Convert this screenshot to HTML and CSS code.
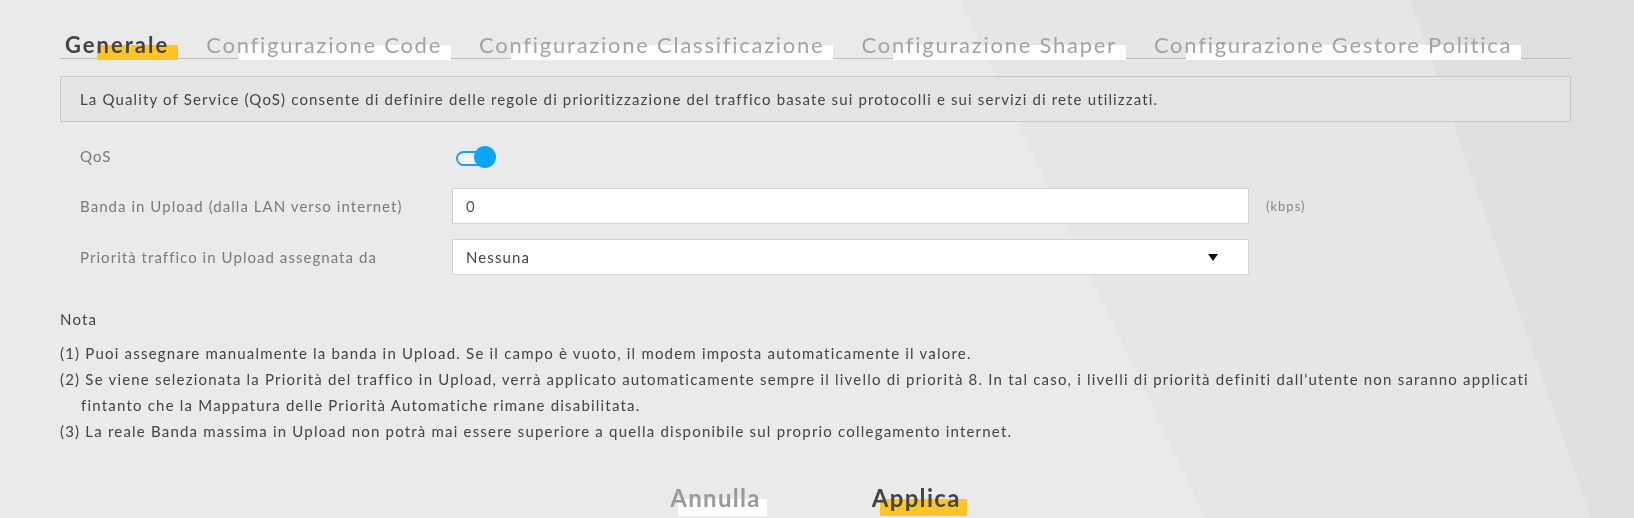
FILE: index.html
```html
<!DOCTYPE html>
<html>
<head>
  <title>QoS - Generale</title>
  <link rel="stylesheet" href="styles.css">
</head>
<body>
  <div class="page">
    <ul class="tabs">
      <li class="tab active"><span>Generale</span></li>
      <li class="tab"><span>Configurazione Code</span></li>
      <li class="tab"><span>Configurazione Classificazione</span></li>
      <li class="tab"><span>Configurazione Shaper</span></li>
      <li class="tab"><span>Configurazione Gestore Politica</span></li>
    </ul>

    <div class="intro">La Quality of Service (QoS) consente di definire delle regole di prioritizzazione del traffico basate sui protocolli e sui servizi di rete utilizzati.</div>

    <form class="settings">
      <div class="row row-switch">
        <label class="label">QoS</label>
        <span class="switch on"><span class="knob"></span></span>
      </div>
      <div class="row">
        <label class="label" for="upload">Banda in Upload (dalla LAN verso internet)</label>
        <input class="text-input" type="text" id="upload" value="0">
        <span class="unit">(kbps)</span>
      </div>
      <div class="row">
        <label class="label">Priorità traffico in Upload assegnata da</label>
        <div class="select">
          <span>Nessuna</span>
          <span class="caret"></span>
        </div>
      </div>
    </form>

    <div class="notes">
      <p class="notes-title">Nota</p>
      <p class="note">(1) Puoi assegnare manualmente la banda in Upload. Se il campo è vuoto, il modem imposta automaticamente il valore.</p>
      <p class="note">(2) Se viene selezionata la Priorità del traffico in Upload, verrà applicato automaticamente sempre il livello di priorità 8. In tal caso, i livelli di priorità definiti dall'utente non saranno applicati fintanto che la Mappatura delle Priorità Automatiche rimane disabilitata.</p>
      <p class="note">(3) La reale Banda massima in Upload non potrà mai essere superiore a quella disponibile sul proprio collegamento internet.</p>
    </div>

    <div class="actions">
      <button type="button" class="btn btn-cancel">Annulla</button>
      <button type="button" class="btn btn-apply">Applica</button>
    </div>
  </div>
</body>
</html>
```

FILE: styles.css
```css
html, body {
  height: 100%;
  overflow: hidden;
}
body {
  margin: 0;
  font-family: Lato, "Liberation Sans", sans-serif;
  background-color: #eaeaea;
  color: #444;
  position: relative;
}
/* background facets */
body::before,
body::after {
  content: "";
  position: fixed;
  top: 0;
  left: 0;
  right: 0;
  bottom: 0;
  z-index: -1;
}
body::before {
  background-color: #e6e6e6;
  clip-path: polygon(960px 0, 100% 0, 100% 100%, 1205px 100%);
}
body::after {
  background-color: #e0e0e0;
  clip-path: polygon(1410px 0, 100% 0, 100% 100%, 1591px 100%);
}
.page {
  padding: 31px 63px 0 60px;
}
.tabs {
  list-style: none;
  margin: 0;
  padding: 0 0 0 5px;
  display: flex;
  gap: 28px;
  border-bottom: 1px solid #bdbdbd;
}
.tab {
  font-size: 22px;
  line-height: 27px;
  color: #a3a3a3;
  letter-spacing: 1.75px;
}
.tab span {
  position: relative;
  z-index: 0;
  padding-right: 9px;
}
.tab span::before {
  content: "";
  position: absolute;
  left: 32px;
  right: 0;
  top: 14px;
  bottom: -2px;
  background-color: #ffffff;
  z-index: -1;
}
.tab.active {
  color: #444;
  font-weight: 700;
  letter-spacing: 2px;
}
.tab.active span::before {
  background-color: #ffc425;
}
.intro {
  margin-top: 17px;
  border: 1px solid #c8c8c8;
  background-color: #e4e4e4;
  padding: 0 19px;
  line-height: 44px;
  font-size: 15px;
  letter-spacing: 1.15px;
  color: #444;
}
.settings {
  margin: 17px 0 0;
  padding-left: 20px;
  display: flex;
  flex-direction: column;
  gap: 15px;
}
.row {
  display: flex;
  align-items: center;
  height: 36px;
}
.row-switch {
  height: 34px;
}
.label {
  width: 372px;
  flex-shrink: 0;
  font-size: 15px;
  letter-spacing: 1.05px;
  color: #7a7a7a;
}
.switch {
  position: relative;
  display: inline-block;
  width: 30px;
  height: 11px;
  margin-left: 4px;
  margin-top: 4px;
  border: 2px solid #1aa3f0;
  border-radius: 8px;
  background-color: #f4f4f4;
}
.switch .knob {
  position: absolute;
  right: -8px;
  top: -7px;
  width: 22px;
  height: 22px;
  border-radius: 50%;
  background-color: #0aa5f5;
}
.text-input,
.select {
  box-sizing: border-box;
  width: 797px;
  height: 36px;
  border: 1px solid #d2d2d2;
  background-color: #fff;
  padding: 0 30px 0 13px;
  font-family: inherit;
  font-size: 15px;
  letter-spacing: 1.1px;
  color: #555;
  outline: none;
}
.select {
  display: flex;
  align-items: center;
  justify-content: space-between;
  color: #444;
}
.caret {
  width: 0;
  height: 0;
  border-left: 5px solid transparent;
  border-right: 5px solid transparent;
  border-top: 7px solid #111;
}
.unit {
  margin-left: 17px;
  font-size: 13px;
  letter-spacing: 1px;
  color: #888;
}
.notes {
  margin-top: 31px;
  font-size: 15px;
  letter-spacing: 1.2px;
  line-height: 26px;
  color: #444;
}
.notes p {
  margin: 0;
}
.notes-title {
  margin-bottom: 8px !important;
}
.note {
  padding-left: 21px;
  text-indent: -21px;
}
.actions {
  display: flex;
  justify-content: center;
  gap: 111px;
  margin-top: 40px;
}
.btn {
  position: relative;
  z-index: 0;
  border: none;
  background: none;
  padding: 0;
  font-family: inherit;
  font-size: 24px;
  font-weight: 700;
  letter-spacing: 1.3px;
  line-height: 28px;
  cursor: pointer;
}
.btn::before {
  content: "";
  position: absolute;
  left: 8px;
  right: -6px;
  top: 15px;
  height: 17px;
  z-index: -1;
}
.btn-cancel {
  color: #9a9a9a;
}
.btn-cancel::before {
  background-color: #fff;
}
.btn-apply {
  color: #444;
}
.btn-apply::before {
  background-color: #ffc425;
}
```
